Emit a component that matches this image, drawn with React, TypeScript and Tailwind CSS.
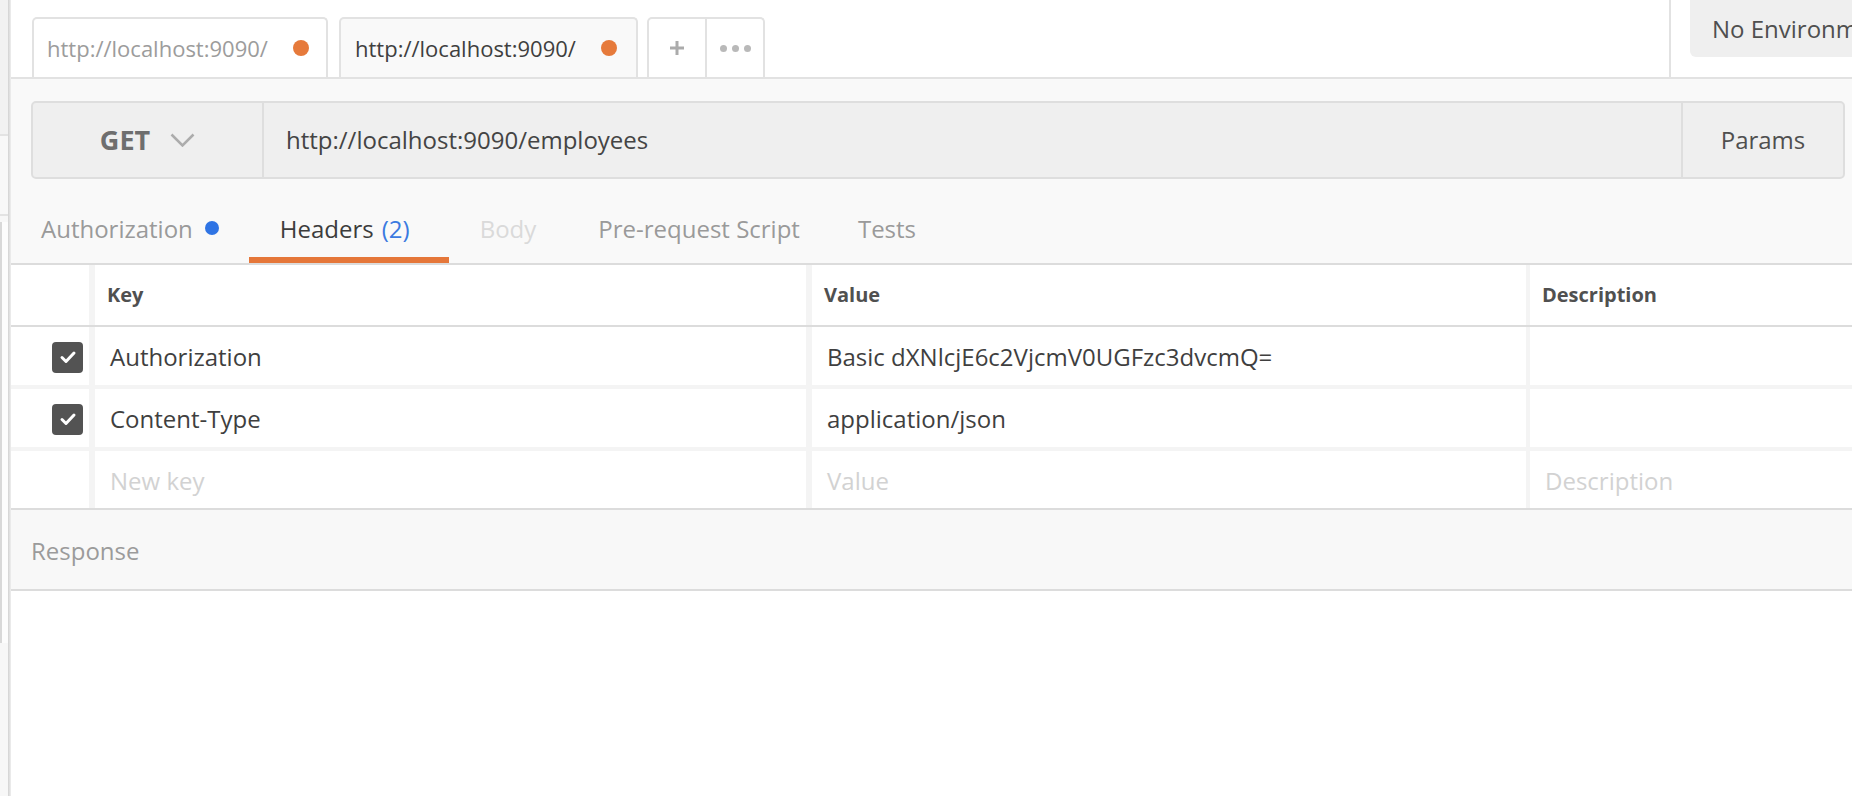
import React from "react";

function Check() {
  return (
    <div className="flex h-[31px] w-[31px] items-center justify-center rounded-[4px] bg-[#535353]">
      <svg width="20" height="20" viewBox="0 0 20 20">
        <path d="M4 10.5l4 4L16 6" fill="none" stroke="#ffffff" strokeWidth="3" strokeLinecap="round" strokeLinejoin="round" />
      </svg>
    </div>
  );
}

function Dot({ color }: { color: string }) {
  return <span className={`inline-block h-[16px] w-[16px] rounded-full ${color}`} />;
}

type RowProps = {
  check?: boolean;
  k: string;
  v: string;
  d: string;
  placeholder?: boolean;
  header?: boolean;
};

function Row({ check, k, v, d, placeholder, header }: RowProps) {
  const txt = header
    ? "text-[20px] font-bold text-[#505050] pl-[12px]"
    : placeholder
    ? "text-[24px] text-[#d2d2d2] pl-[15px] pt-[2px]"
    : "text-[24px] text-[#3f3f3f] pl-[15px] pt-[2px]";
  return (
    <div className="flex h-full items-stretch bg-white">
      <div className="flex w-[78px] shrink-0 items-center justify-end pr-[6px] pt-[2px]">{check ? <Check /> : null}</div>
      <div className={`flex w-[717px] shrink-0 items-center border-l-[6px] border-[#f4f4f4] ${txt}`}>{k}</div>
      <div className={`flex w-[720px] shrink-0 items-center border-l-[6px] border-[#f4f4f4] ${txt}`}>{v}</div>
      <div className={`flex flex-1 items-center border-l-[4px] border-[#f4f4f4] ${txt}`}>{d}</div>
    </div>
  );
}

export default function App() {
  return (
    <div className="flex h-[796px] w-[1852px] overflow-hidden bg-white font-['Open_Sans','Liberation_Sans',sans-serif]">
      {/* sidebar sliver */}
      <div className="flex w-[8px] shrink-0 flex-col bg-[#f7f7f7]">
        <div className="h-[136px] shrink-0 border-b-2 border-[#e3e3e3] bg-[#f2f2f2]" />
        <div className="h-[80px] shrink-0 border-b-2 border-[#e3e3e3] bg-[#f8f8f8]" />
        <div className="mt-[6px] h-[421px] shrink-0 border-l-2 border-[#d8d8d8] bg-[#fcfcfc]" />
      </div>
      <div className="w-[3px] shrink-0 bg-gradient-to-r from-[#d2d2d2] to-[#efefef]" />

      <div className="flex min-w-0 flex-1 flex-col">
        {/* top tab bar */}
        <div className="flex h-[79px] shrink-0 border-b-2 border-[#e2e2e2] bg-white">
          <div className="flex flex-1 items-end pl-[21px]">
            <div className="flex h-[60px] w-[296px] items-center justify-between rounded-t-[5px] border-2 border-b-0 border-[#e2e2e2] bg-white pl-[13px] pr-[17px]">
              <span className="text-[22px] text-[#9c9c9c]">http://localhost:9090/</span>
              <Dot color="bg-[#e67a3b]" />
            </div>
            <div className="ml-[11px] flex h-[60px] w-[299px] items-center justify-between rounded-t-[5px] border-2 border-b-0 border-[#e2e2e2] bg-[#f9f9f9] pl-[14px] pr-[19px]">
              <span className="text-[22px] text-[#3f3f3f]">http://localhost:9090/</span>
              <Dot color="bg-[#e67a3b]" />
            </div>
            <div className="ml-[9px] flex h-[60px] w-[118px] rounded-t-[5px] border-2 border-b-0 border-[#e2e2e2] bg-white">
              <div className="flex w-[58px] items-center justify-center border-r-2 border-[#e2e2e2]">
                <svg width="16" height="16" viewBox="0 0 16 16">
                  <path d="M8 1v14M1 8h14" stroke="#ababab" strokeWidth="3" />
                </svg>
              </div>
              <div className="flex flex-1 items-center justify-center gap-[5px]">
                <span className="h-[7px] w-[7px] rounded-full bg-[#b9b9b9]" />
                <span className="h-[7px] w-[7px] rounded-full bg-[#b9b9b9]" />
                <span className="h-[7px] w-[7px] rounded-full bg-[#b9b9b9]" />
              </div>
            </div>
          </div>
          <div className="flex w-[183px] shrink-0 items-start border-l-2 border-[#e2e2e2] pl-[19px]">
            <div className="flex h-[57px] flex-1 items-center whitespace-nowrap rounded-bl-[6px] bg-[#efefef] pl-[22px] text-[24px] text-[#4f4f4f]">
              No Environment
            </div>
          </div>
        </div>

        {/* request area */}
        <div className="shrink-0 bg-[#f9f9f9] pl-[20px] pr-[7px] pt-[22px]">
          <div className="flex h-[78px] rounded-[5px] border-2 border-[#dedede] bg-[#efefef]">
            <div className="flex w-[231px] shrink-0 items-center justify-center gap-[20px] border-r-2 border-[#dedede]">
              <span className="text-[27px] font-bold text-[#6e6e6e]">GET</span>
              <svg width="25" height="14" viewBox="0 0 25 14">
                <path d="M1.5 1.5l11 11 11-11" fill="none" stroke="#acacac" strokeWidth="2.5" />
              </svg>
            </div>
            <div className="flex flex-1 items-center pl-[22px] text-[24px] text-[#444444]">
              http://localhost:9090/employees
            </div>
            <div className="flex w-[162px] shrink-0 items-center justify-center border-l-2 border-[#dedede] text-[24px] text-[#4f4f4f]">
              Params
            </div>
          </div>

          {/* sub tabs */}
          <div className="-ml-[20px] flex h-[84px] items-stretch text-[24px]">
            <div className="flex items-start px-[30px] pt-[32px]">
              <span className="text-[#9a9a9a]">Authorization</span>
              <span className="ml-[12px] mt-[10px] inline-block h-[14px] w-[14px] rounded-full bg-[#2f74e4]" />
            </div>
            <div className="relative flex items-start pl-[31px] pr-[39px] pt-[32px]">
              <span className="text-[#3c3c3c]">Headers</span>
              <span className="ml-[8px] text-[#3b7ae0]">(2)</span>
              <span className="absolute bottom-0 left-0 right-0 h-[6px] bg-[#e5773a]" />
            </div>
            <div className="flex items-start px-[31px] pt-[32px] text-[#dadada]">Body</div>
            <div className="flex items-start px-[31px] pt-[32px] text-[#9a9a9a]">Pre-request Script</div>
            <div className="flex items-start px-[27px] pt-[32px] text-[#9a9a9a]">Tests</div>
          </div>
        </div>

        {/* headers table */}
        <div className="flex shrink-0 flex-col border-t-2 border-[#dcdcdc] bg-[#f4f4f4]">
          <div className="h-[62px] border-b-2 border-[#dcdcdc]">
            <Row header k="Key" v="Value" d="Description" />
          </div>
          <div className="h-[58px]">
            <Row check k="Authorization" v="Basic dXNlcjE6c2VjcmV0UGFzc3dvcmQ=" d="" />
          </div>
          <div className="mt-[4px] h-[58px]">
            <Row check k="Content-Type" v="application/json" d="" />
          </div>
          <div className="mt-[4px] h-[57px]">
            <Row placeholder k="New key" v="Value" d="Description" />
          </div>
        </div>

        {/* response */}
        <div className="flex h-[83px] shrink-0 items-center border-y-2 border-[#dcdcdc] bg-[#f8f8f8] pl-[20px] pt-[2px] text-[24px] text-[#9b9b9b]">
          Response
        </div>
        <div className="flex-1 bg-white" />
      </div>
    </div>
  );
}
